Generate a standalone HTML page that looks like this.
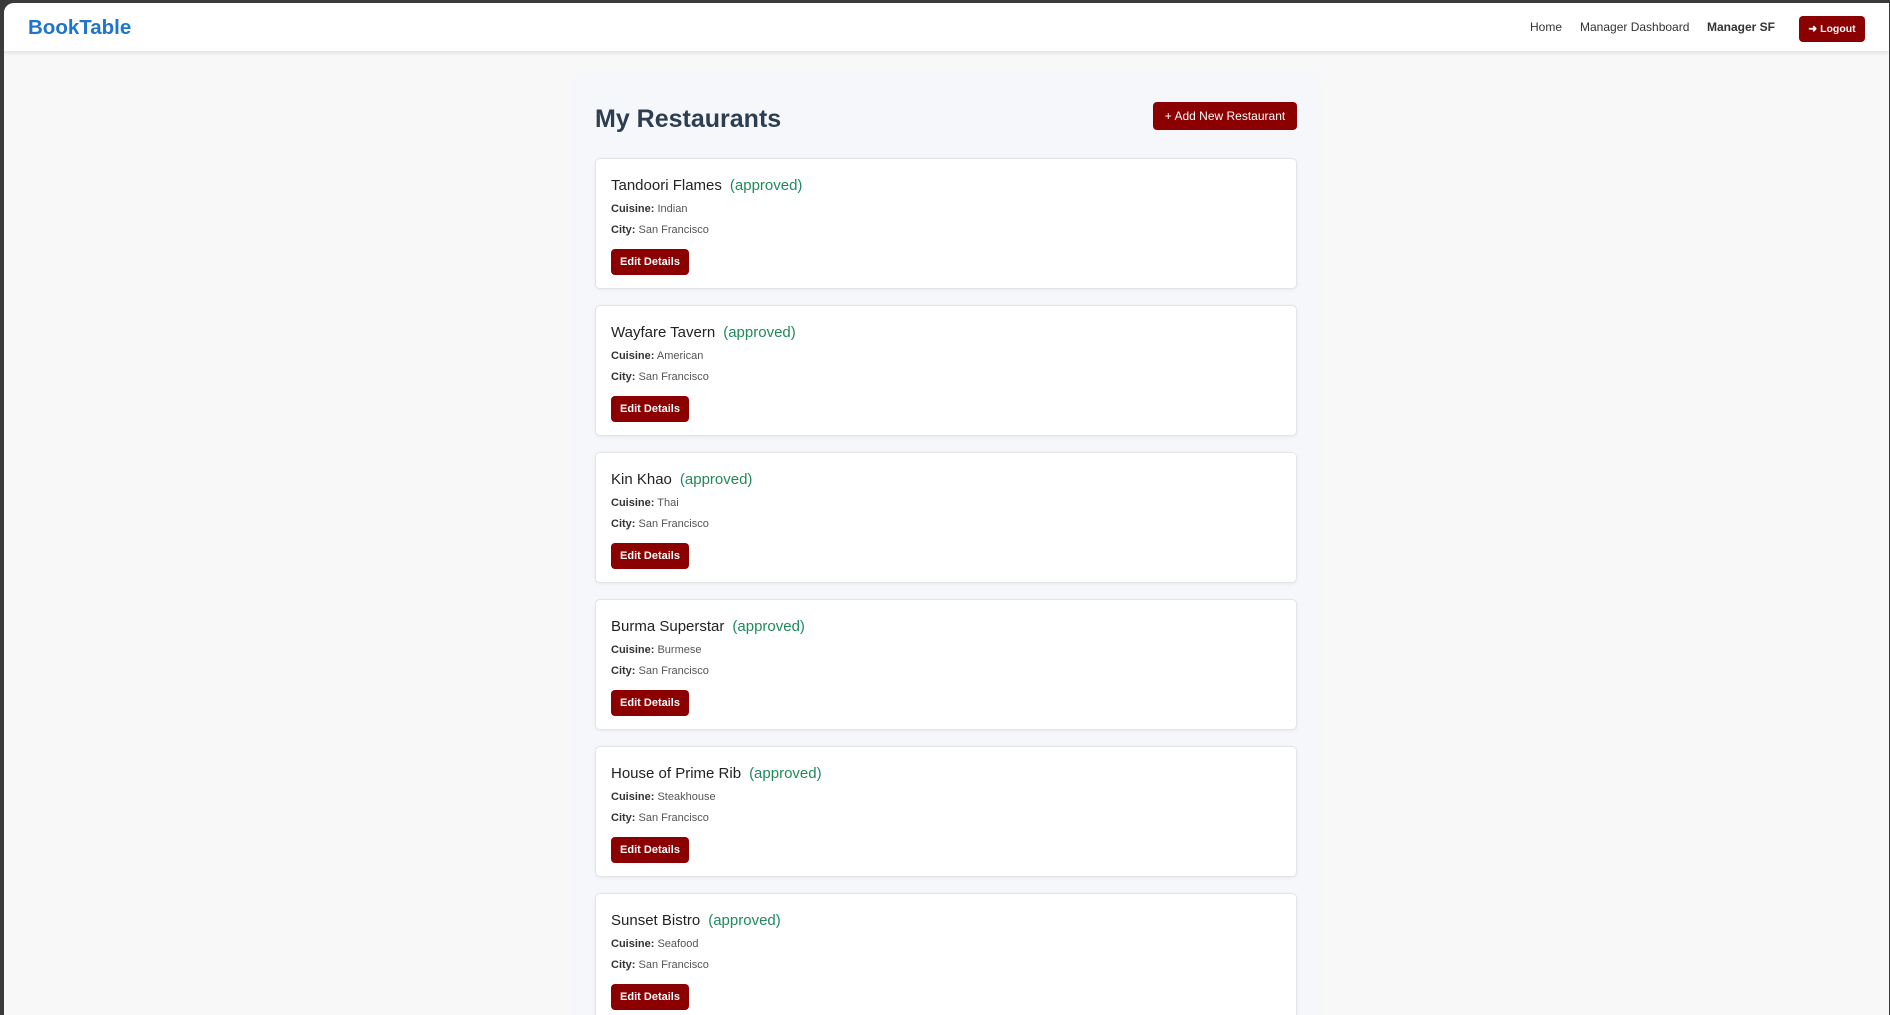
<!DOCTYPE html>
<html><head><meta charset="utf-8"><style>
*{box-sizing:border-box;margin:0;padding:0}
html,body{width:1890px;height:1015px;overflow:hidden;background:#3a3a3a}
.page{position:absolute;left:4px;top:3px;width:1885px;height:1012px;background:#f8f8f8;border-top-left-radius:10px;overflow:hidden;font-family:"Liberation Sans",sans-serif}
.nav{position:absolute;left:0;top:0;width:100%;height:48px;background:#fff;box-shadow:0 2px 4px rgba(0,0,0,.1)}
.logo{position:absolute;left:24px;top:13px;font-size:20.5px;font-weight:bold;color:#1f74cc}
.nl{position:absolute;top:17px;font-size:12px;color:#333}
.lo{position:absolute;left:1795px;top:13px;width:66px;height:26px;background:#8b0000;border-radius:4px;color:#fff;font-size:10.5px;font-weight:bold;line-height:26px;text-align:center}
.cont{position:absolute;left:567px;top:69px;width:751px;height:960px;background:#f5f7fb;border-radius:10px}
h1{position:absolute;left:24px;top:33px;font-size:25px;color:#2c3e50}
.add{position:absolute;left:582px;top:30px;width:144px;height:28px;background:#8b0000;color:#fff;border-radius:4px;font-size:12px;line-height:28px;text-align:center}
.card{position:absolute;left:24px;width:702px;height:131px;background:#fff;border:1px solid #e2e4e8;border-radius:5px;box-shadow:0 1px 3px rgba(0,0,0,.06)}
.t{position:absolute;left:15px;top:18px;font-size:15px;color:#222}
.t span{color:#1f8a5a;margin-left:8px}
.l{position:absolute;left:15px;font-size:11px;color:#555}
.l b{color:#333}
.e{position:absolute;left:15px;top:90px;width:78px;height:26px;background:#8b0000;color:#fff;border-radius:4px;font-size:11px;font-weight:bold;line-height:26px;text-align:center}
</style></head><body><div class="page">
<div class="nav"><div class="logo">BookTable</div>
<div class="nl" style="left:1526px">Home</div>
<div class="nl" style="left:1576px">Manager Dashboard</div>
<div class="nl" style="left:1703px;font-weight:bold">Manager SF</div>
<div class="lo">&#10140; Logout</div></div>
<div class="cont"><h1>My Restaurants</h1><div class="add">+ Add New Restaurant</div>
<div class="card" style="top:86px"><div class="t">Tandoori Flames<span>(approved)</span></div><div class="l" style="top:44px"><b>Cuisine:</b> Indian</div><div class="l" style="top:65px"><b>City:</b> San Francisco</div><div class="e">Edit Details</div></div>
<div class="card" style="top:233px"><div class="t">Wayfare Tavern<span>(approved)</span></div><div class="l" style="top:44px"><b>Cuisine:</b> American</div><div class="l" style="top:65px"><b>City:</b> San Francisco</div><div class="e">Edit Details</div></div>
<div class="card" style="top:380px"><div class="t">Kin Khao<span>(approved)</span></div><div class="l" style="top:44px"><b>Cuisine:</b> Thai</div><div class="l" style="top:65px"><b>City:</b> San Francisco</div><div class="e">Edit Details</div></div>
<div class="card" style="top:527px"><div class="t">Burma Superstar<span>(approved)</span></div><div class="l" style="top:44px"><b>Cuisine:</b> Burmese</div><div class="l" style="top:65px"><b>City:</b> San Francisco</div><div class="e">Edit Details</div></div>
<div class="card" style="top:674px"><div class="t">House of Prime Rib<span>(approved)</span></div><div class="l" style="top:44px"><b>Cuisine:</b> Steakhouse</div><div class="l" style="top:65px"><b>City:</b> San Francisco</div><div class="e">Edit Details</div></div>
<div class="card" style="top:821px"><div class="t">Sunset Bistro<span>(approved)</span></div><div class="l" style="top:44px"><b>Cuisine:</b> Seafood</div><div class="l" style="top:65px"><b>City:</b> San Francisco</div><div class="e">Edit Details</div></div>
</div></div></body></html>
